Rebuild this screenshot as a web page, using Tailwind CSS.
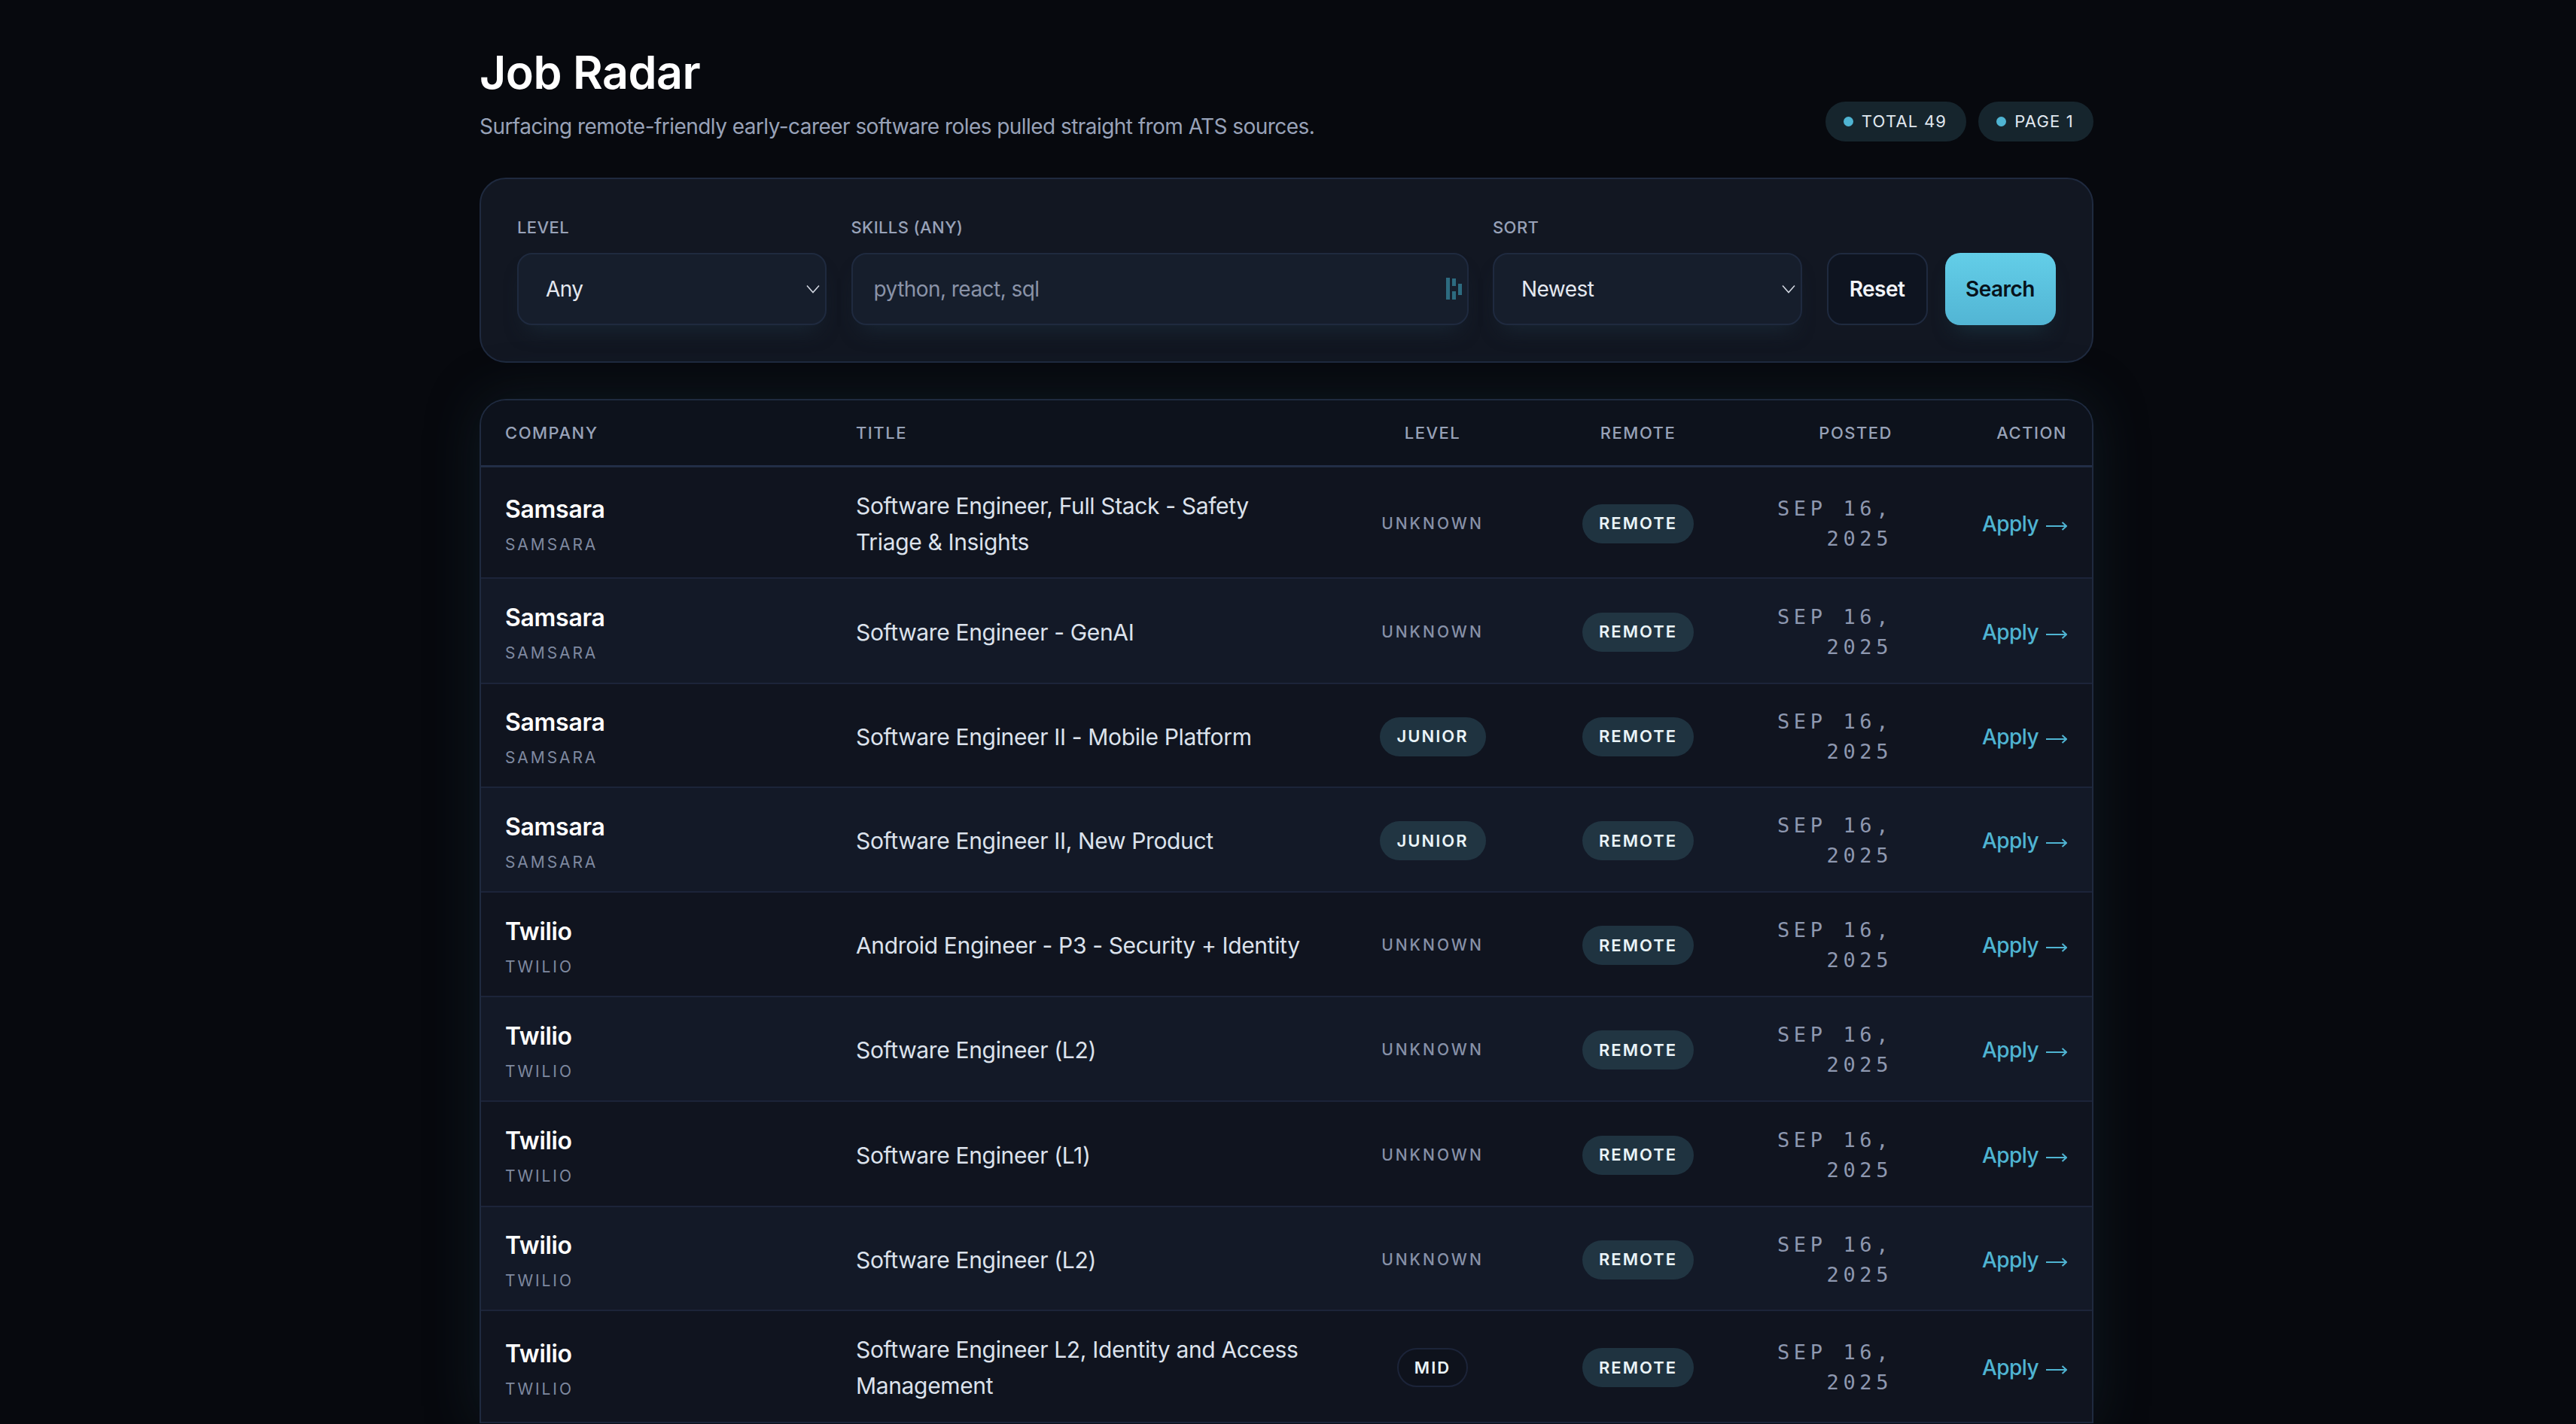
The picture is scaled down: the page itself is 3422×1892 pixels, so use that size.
<!DOCTYPE html>
<html><head><script src="https://cdn.jsdelivr.net/npm/@tailwindcss/browser@4"></script></head>
<body class="bg-[#07090e]">
<div class="h-[1892px] overflow-hidden font-['Inter',sans-serif]">
<div class="w-[2144px] ml-[637px] pt-[58px]">
<header class="flex items-end justify-between">
  <div>
    <h1 class="text-[61px] leading-[76px] font-semibold tracking-[-0.5px] text-white">Job Radar</h1>
    <p class="mt-[14px] text-[28px] leading-[40px] tracking-[-0.55px] text-[#98a2b8]">Surfacing remote-friendly early-career software roles pulled straight from ATS sources.</p>
  </div>
  <div class="flex gap-[16px]">
    <span class="flex items-center gap-[11px] h-[53px] pl-[24px] pr-[26px] rounded-full bg-[#16252d] text-[22px] tracking-[1.2px] text-[#e0e8f0]"><i class="w-[13px] h-[13px] rounded-full bg-[#4fb4d2]"></i>TOTAL 49</span>
    <span class="flex items-center gap-[11px] h-[53px] pl-[24px] pr-[26px] rounded-full bg-[#16252d] text-[22px] tracking-[1.2px] text-[#e0e8f0]"><i class="w-[13px] h-[13px] rounded-full bg-[#4fb4d2]"></i>PAGE 1</span>
  </div>
</header>
<section class="mt-[48px] h-[246px] rounded-[35px] border-2 border-[#1f2a3f] bg-[#121722] pl-[48px] pt-[49px] flex items-start gap-[32.5px]">
  <div class="w-[411px]">
    <div class="text-[22px] leading-[30px] font-medium tracking-[0.4px] text-[#98a2b8]">LEVEL</div>
    <div class="mt-[19px] h-[96px] rounded-[20px] border-2 border-[#1f2a3f] bg-[#161e2c] shadow-[0_18px_28px_-14px_#1a2836] flex items-center justify-between pl-[36px] pr-[7px] text-[28px] tracking-[-0.55px] text-[#e4e8f0]">Any
      <svg class="w-[18px] h-[12px]" viewBox="0 0 18 12" fill="none" stroke="#d5dae4" stroke-width="1.5"><path d="M1 1.5l8 9 8-9"/></svg>
    </div>
  </div>
  <div class="w-[820px]">
    <div class="text-[22px] leading-[30px] font-medium tracking-[0.4px] text-[#98a2b8]">SKILLS (ANY)</div>
    <div class="mt-[19px] h-[96px] rounded-[20px] border-2 border-[#1f2a3f] bg-[#161e2c] shadow-[0_18px_28px_-14px_#1a2836] flex items-center justify-between pl-[28px] pr-[7px] text-[28px] tracking-[-0.55px] text-[#8a93a8]">python, react, sql
      <svg class="w-[21px] h-[30px]" viewBox="0 0 21 30" fill="#2d6b80"><rect x="0" y="0" width="5" height="29"/><rect x="8" y="1" width="5" height="10"/><rect x="8" y="18" width="5" height="11"/><rect x="16" y="8" width="5" height="15"/></svg>
    </div>
  </div>
  <div class="w-[411px]">
    <div class="text-[22px] leading-[30px] font-medium tracking-[0.4px] text-[#98a2b8]">SORT</div>
    <div class="mt-[19px] h-[96px] rounded-[20px] border-2 border-[#1f2a3f] bg-[#161e2c] shadow-[0_18px_28px_-14px_#1a2836] flex items-center justify-between pl-[36px] pr-[7px] text-[28px] tracking-[-0.55px] text-[#e4e8f0]">Newest
      <svg class="w-[18px] h-[12px]" viewBox="0 0 18 12" fill="none" stroke="#d5dae4" stroke-width="1.5"><path d="M1 1.5l8 9 8-9"/></svg>
    </div>
  </div>
  <div class="flex gap-[23px] mt-[49px]">
    <button class="w-[134px] h-[96px] rounded-[20px] border-2 border-[#1f2a3f] bg-[#0e1420] text-[28px] tracking-[-0.55px] font-semibold text-[#f2f4f8]">Reset</button>
    <button class="w-[147px] h-[96px] rounded-[20px] bg-linear-to-b from-[#63cee8] to-[#52b5d4] shadow-[0_18px_28px_-14px_#1a3440] text-[28px] tracking-[-0.55px] font-semibold text-[#07121a]">Search</button>
  </div>
</section>
<section class="mt-[48px] rounded-t-[35px] border-x-2 border-t-2 border-[#1f2a3f] bg-[#10141f] shadow-[0_0_70px_rgba(24,44,56,0.45)]">
  <div class="grid grid-cols-[498px_653px_226px_320px_178px_1fr] items-center h-[89px] rounded-t-[33px] border-b-[3px] border-[#222e46] bg-[#0d121c] text-[22px] font-medium tracking-[1.5px] text-[#98a2b8]">
    <div class="pl-[32px]">COMPANY</div><div>TITLE</div><div class="text-center">LEVEL</div><div class="text-center">REMOTE</div><div class="text-right">POSTED</div><div class="text-right pr-[33px]">ACTION</div>
  </div>

  <div class="grid grid-cols-[498px_653px_226px_320px_178px_1fr] items-center h-[148px] pt-[3px] border-b-2 border-[#1c2439] bg-[#10141f]">
    <div class="pl-[32px] pt-[3px]"><div class="text-[32px] leading-[42px] font-semibold tracking-[-0.3px] text-white">Samsara</div><div class="mt-[12px] text-[21px] leading-[28px] tracking-[2.9px] text-[#7f89a0]">SAMSARA</div></div>
    <div class="pr-[45px] text-[30px] leading-[48px] tracking-[-0.35px] text-[#dce2ec]">Software Engineer, Full Stack - Safety Triage &amp; Insights</div>
    <div class="flex justify-center"><span class="text-[21px] leading-[52px] tracking-[3px] font-medium text-[#8791a8]">UNKNOWN</span></div>
    <div class="flex justify-center"><span class="h-[52px] px-[22px] flex items-center rounded-full bg-[#1f3340] text-[22px] font-semibold tracking-[2px] text-[#eaf4f8]">REMOTE</span></div>
    <div class="text-right font-['DejaVu_Sans_Mono',monospace] text-[27px] leading-[40px] tracking-[5.6px] text-[#8e98b0]">SEP 16, 2025</div>
    <div class="flex items-center justify-end gap-[10px] pr-[33px] text-[28px] font-medium tracking-[-0.55px] text-[#4fb4d2]">Apply <svg class="w-[28px] h-[12px] mt-[6px]" viewBox="0 0 28 12" fill="none" stroke="#4fb4d2" stroke-width="2"><path d="M0 6h27M21.5 1l5.5 5-5.5 5"/></svg></div>
  </div>
  <div class="grid grid-cols-[498px_653px_226px_320px_178px_1fr] items-center h-[140px] pt-[3px] border-b-2 border-[#1c2439] bg-[#131927]">
    <div class="pl-[32px] pt-[3px]"><div class="text-[32px] leading-[42px] font-semibold tracking-[-0.3px] text-white">Samsara</div><div class="mt-[12px] text-[21px] leading-[28px] tracking-[2.9px] text-[#7f89a0]">SAMSARA</div></div>
    <div class="pr-[45px] text-[30px] leading-[48px] tracking-[-0.35px] text-[#dce2ec]">Software Engineer - GenAI</div>
    <div class="flex justify-center"><span class="text-[21px] leading-[52px] tracking-[3px] font-medium text-[#8791a8]">UNKNOWN</span></div>
    <div class="flex justify-center"><span class="h-[52px] px-[22px] flex items-center rounded-full bg-[#213542] text-[22px] font-semibold tracking-[2px] text-[#eaf4f8]">REMOTE</span></div>
    <div class="text-right font-['DejaVu_Sans_Mono',monospace] text-[27px] leading-[40px] tracking-[5.6px] text-[#8e98b0]">SEP 16, 2025</div>
    <div class="flex items-center justify-end gap-[10px] pr-[33px] text-[28px] font-medium tracking-[-0.55px] text-[#4fb4d2]">Apply <svg class="w-[28px] h-[12px] mt-[6px]" viewBox="0 0 28 12" fill="none" stroke="#4fb4d2" stroke-width="2"><path d="M0 6h27M21.5 1l5.5 5-5.5 5"/></svg></div>
  </div>
  <div class="grid grid-cols-[498px_653px_226px_320px_178px_1fr] items-center h-[138px] pt-[3px] border-b-2 border-[#1c2439] bg-[#10141f]">
    <div class="pl-[32px] pt-[3px]"><div class="text-[32px] leading-[42px] font-semibold tracking-[-0.3px] text-white">Samsara</div><div class="mt-[12px] text-[21px] leading-[28px] tracking-[2.9px] text-[#7f89a0]">SAMSARA</div></div>
    <div class="pr-[45px] text-[30px] leading-[48px] tracking-[-0.35px] text-[#dce2ec]">Software Engineer II - Mobile Platform</div>
    <div class="flex justify-center"><span class="h-[52px] px-[23px] flex items-center rounded-full bg-[#1f3340] text-[22px] font-semibold tracking-[2px] text-[#eaf4f8]">JUNIOR</span></div>
    <div class="flex justify-center"><span class="h-[52px] px-[22px] flex items-center rounded-full bg-[#1f3340] text-[22px] font-semibold tracking-[2px] text-[#eaf4f8]">REMOTE</span></div>
    <div class="text-right font-['DejaVu_Sans_Mono',monospace] text-[27px] leading-[40px] tracking-[5.6px] text-[#8e98b0]">SEP 16, 2025</div>
    <div class="flex items-center justify-end gap-[10px] pr-[33px] text-[28px] font-medium tracking-[-0.55px] text-[#4fb4d2]">Apply <svg class="w-[28px] h-[12px] mt-[6px]" viewBox="0 0 28 12" fill="none" stroke="#4fb4d2" stroke-width="2"><path d="M0 6h27M21.5 1l5.5 5-5.5 5"/></svg></div>
  </div>
  <div class="grid grid-cols-[498px_653px_226px_320px_178px_1fr] items-center h-[139px] pt-[3px] border-b-2 border-[#1c2439] bg-[#131927]">
    <div class="pl-[32px] pt-[3px]"><div class="text-[32px] leading-[42px] font-semibold tracking-[-0.3px] text-white">Samsara</div><div class="mt-[12px] text-[21px] leading-[28px] tracking-[2.9px] text-[#7f89a0]">SAMSARA</div></div>
    <div class="pr-[45px] text-[30px] leading-[48px] tracking-[-0.35px] text-[#dce2ec]">Software Engineer II, New Product</div>
    <div class="flex justify-center"><span class="h-[52px] px-[23px] flex items-center rounded-full bg-[#213542] text-[22px] font-semibold tracking-[2px] text-[#eaf4f8]">JUNIOR</span></div>
    <div class="flex justify-center"><span class="h-[52px] px-[22px] flex items-center rounded-full bg-[#213542] text-[22px] font-semibold tracking-[2px] text-[#eaf4f8]">REMOTE</span></div>
    <div class="text-right font-['DejaVu_Sans_Mono',monospace] text-[27px] leading-[40px] tracking-[5.6px] text-[#8e98b0]">SEP 16, 2025</div>
    <div class="flex items-center justify-end gap-[10px] pr-[33px] text-[28px] font-medium tracking-[-0.55px] text-[#4fb4d2]">Apply <svg class="w-[28px] h-[12px] mt-[6px]" viewBox="0 0 28 12" fill="none" stroke="#4fb4d2" stroke-width="2"><path d="M0 6h27M21.5 1l5.5 5-5.5 5"/></svg></div>
  </div>
  <div class="grid grid-cols-[498px_653px_226px_320px_178px_1fr] items-center h-[139px] pt-[3px] border-b-2 border-[#1c2439] bg-[#10141f]">
    <div class="pl-[32px] pt-[3px]"><div class="text-[32px] leading-[42px] font-semibold tracking-[-0.3px] text-white">Twilio</div><div class="mt-[12px] text-[21px] leading-[28px] tracking-[2.9px] text-[#7f89a0]">TWILIO</div></div>
    <div class="pr-[45px] text-[30px] leading-[48px] tracking-[-0.35px] text-[#dce2ec]">Android Engineer - P3 - Security + Identity</div>
    <div class="flex justify-center"><span class="text-[21px] leading-[52px] tracking-[3px] font-medium text-[#8791a8]">UNKNOWN</span></div>
    <div class="flex justify-center"><span class="h-[52px] px-[22px] flex items-center rounded-full bg-[#1f3340] text-[22px] font-semibold tracking-[2px] text-[#eaf4f8]">REMOTE</span></div>
    <div class="text-right font-['DejaVu_Sans_Mono',monospace] text-[27px] leading-[40px] tracking-[5.6px] text-[#8e98b0]">SEP 16, 2025</div>
    <div class="flex items-center justify-end gap-[10px] pr-[33px] text-[28px] font-medium tracking-[-0.55px] text-[#4fb4d2]">Apply <svg class="w-[28px] h-[12px] mt-[6px]" viewBox="0 0 28 12" fill="none" stroke="#4fb4d2" stroke-width="2"><path d="M0 6h27M21.5 1l5.5 5-5.5 5"/></svg></div>
  </div>
  <div class="grid grid-cols-[498px_653px_226px_320px_178px_1fr] items-center h-[139px] pt-[3px] border-b-2 border-[#1c2439] bg-[#131927]">
    <div class="pl-[32px] pt-[3px]"><div class="text-[32px] leading-[42px] font-semibold tracking-[-0.3px] text-white">Twilio</div><div class="mt-[12px] text-[21px] leading-[28px] tracking-[2.9px] text-[#7f89a0]">TWILIO</div></div>
    <div class="pr-[45px] text-[30px] leading-[48px] tracking-[-0.35px] text-[#dce2ec]">Software Engineer (L2)</div>
    <div class="flex justify-center"><span class="text-[21px] leading-[52px] tracking-[3px] font-medium text-[#8791a8]">UNKNOWN</span></div>
    <div class="flex justify-center"><span class="h-[52px] px-[22px] flex items-center rounded-full bg-[#213542] text-[22px] font-semibold tracking-[2px] text-[#eaf4f8]">REMOTE</span></div>
    <div class="text-right font-['DejaVu_Sans_Mono',monospace] text-[27px] leading-[40px] tracking-[5.6px] text-[#8e98b0]">SEP 16, 2025</div>
    <div class="flex items-center justify-end gap-[10px] pr-[33px] text-[28px] font-medium tracking-[-0.55px] text-[#4fb4d2]">Apply <svg class="w-[28px] h-[12px] mt-[6px]" viewBox="0 0 28 12" fill="none" stroke="#4fb4d2" stroke-width="2"><path d="M0 6h27M21.5 1l5.5 5-5.5 5"/></svg></div>
  </div>
  <div class="grid grid-cols-[498px_653px_226px_320px_178px_1fr] items-center h-[140px] pt-[3px] border-b-2 border-[#1c2439] bg-[#10141f]">
    <div class="pl-[32px] pt-[3px]"><div class="text-[32px] leading-[42px] font-semibold tracking-[-0.3px] text-white">Twilio</div><div class="mt-[12px] text-[21px] leading-[28px] tracking-[2.9px] text-[#7f89a0]">TWILIO</div></div>
    <div class="pr-[45px] text-[30px] leading-[48px] tracking-[-0.35px] text-[#dce2ec]">Software Engineer (L1)</div>
    <div class="flex justify-center"><span class="text-[21px] leading-[52px] tracking-[3px] font-medium text-[#8791a8]">UNKNOWN</span></div>
    <div class="flex justify-center"><span class="h-[52px] px-[22px] flex items-center rounded-full bg-[#1f3340] text-[22px] font-semibold tracking-[2px] text-[#eaf4f8]">REMOTE</span></div>
    <div class="text-right font-['DejaVu_Sans_Mono',monospace] text-[27px] leading-[40px] tracking-[5.6px] text-[#8e98b0]">SEP 16, 2025</div>
    <div class="flex items-center justify-end gap-[10px] pr-[33px] text-[28px] font-medium tracking-[-0.55px] text-[#4fb4d2]">Apply <svg class="w-[28px] h-[12px] mt-[6px]" viewBox="0 0 28 12" fill="none" stroke="#4fb4d2" stroke-width="2"><path d="M0 6h27M21.5 1l5.5 5-5.5 5"/></svg></div>
  </div>
  <div class="grid grid-cols-[498px_653px_226px_320px_178px_1fr] items-center h-[138px] pt-[3px] border-b-2 border-[#1c2439] bg-[#131927]">
    <div class="pl-[32px] pt-[3px]"><div class="text-[32px] leading-[42px] font-semibold tracking-[-0.3px] text-white">Twilio</div><div class="mt-[12px] text-[21px] leading-[28px] tracking-[2.9px] text-[#7f89a0]">TWILIO</div></div>
    <div class="pr-[45px] text-[30px] leading-[48px] tracking-[-0.35px] text-[#dce2ec]">Software Engineer (L2)</div>
    <div class="flex justify-center"><span class="text-[21px] leading-[52px] tracking-[3px] font-medium text-[#8791a8]">UNKNOWN</span></div>
    <div class="flex justify-center"><span class="h-[52px] px-[22px] flex items-center rounded-full bg-[#213542] text-[22px] font-semibold tracking-[2px] text-[#eaf4f8]">REMOTE</span></div>
    <div class="text-right font-['DejaVu_Sans_Mono',monospace] text-[27px] leading-[40px] tracking-[5.6px] text-[#8e98b0]">SEP 16, 2025</div>
    <div class="flex items-center justify-end gap-[10px] pr-[33px] text-[28px] font-medium tracking-[-0.55px] text-[#4fb4d2]">Apply <svg class="w-[28px] h-[12px] mt-[6px]" viewBox="0 0 28 12" fill="none" stroke="#4fb4d2" stroke-width="2"><path d="M0 6h27M21.5 1l5.5 5-5.5 5"/></svg></div>
  </div>
  <div class="grid grid-cols-[498px_653px_226px_320px_178px_1fr] items-center h-[149px] pt-[3px] border-b-2 border-[#1c2439] bg-[#10141f]">
    <div class="pl-[32px] pt-[3px]"><div class="text-[32px] leading-[42px] font-semibold tracking-[-0.3px] text-white">Twilio</div><div class="mt-[12px] text-[21px] leading-[28px] tracking-[2.9px] text-[#7f89a0]">TWILIO</div></div>
    <div class="pr-[45px] text-[30px] leading-[48px] tracking-[-0.35px] text-[#dce2ec]">Software Engineer L2, Identity and Access Management</div>
    <div class="flex justify-center"><span class="h-[52px] px-[21px] flex items-center rounded-full border-2 border-[#1c2439] bg-[#0e121c] text-[22px] font-semibold tracking-[2px] text-[#eaf4f8]">MID</span></div>
    <div class="flex justify-center"><span class="h-[52px] px-[22px] flex items-center rounded-full bg-[#1f3340] text-[22px] font-semibold tracking-[2px] text-[#eaf4f8]">REMOTE</span></div>
    <div class="text-right font-['DejaVu_Sans_Mono',monospace] text-[27px] leading-[40px] tracking-[5.6px] text-[#8e98b0]">SEP 16, 2025</div>
    <div class="flex items-center justify-end gap-[10px] pr-[33px] text-[28px] font-medium tracking-[-0.55px] text-[#4fb4d2]">Apply <svg class="w-[28px] h-[12px] mt-[6px]" viewBox="0 0 28 12" fill="none" stroke="#4fb4d2" stroke-width="2"><path d="M0 6h27M21.5 1l5.5 5-5.5 5"/></svg></div>
  </div>
</section>
</div></div>
</body></html>
